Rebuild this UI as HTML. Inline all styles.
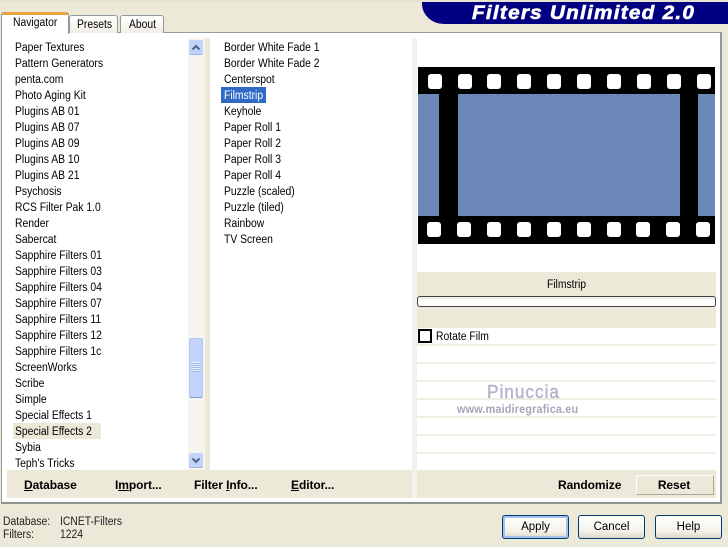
<!DOCTYPE html>
<html><head><meta charset="utf-8"><style>
html,body{margin:0;padding:0;}
body{width:728px;height:547px;overflow:hidden;background:#ece9d8;position:relative;font-family:"Liberation Sans",sans-serif;font-size:11.5px;color:#000;}
div{position:absolute;box-sizing:border-box;}
.t{white-space:nowrap;line-height:16px;height:16px;margin-top:1px;transform:scaleX(.9);transform-origin:0 0;}
.b{font-weight:bold;font-size:12px;white-space:nowrap;line-height:16px;letter-spacing:-.08px;}
.btn{border:1px solid #003c74;border-radius:3px;background:linear-gradient(#fff,#f3f2ea 70%,#dcd8c8);text-align:center;line-height:22px;font-size:11.5px;}
.hole{width:14px;height:15px;background:#fff;border-radius:3px;}
.sep{left:417px;width:299px;height:2px;background:#f0eee2;}
u{text-decoration:underline;}
</style></head><body>
<div style="left:0;top:0;width:728px;height:2px;background:#e6e3d2"></div>
<!-- banner -->
<div style="left:422px;top:2px;width:306px;height:22px;background:#000080;border-bottom-left-radius:22px 20px;"></div>
<div class="t" style="left:472px;top:1px;height:24px;line-height:24px;font-size:19px;font-weight:bold;font-style:italic;color:#fff;letter-spacing:1.15px;-webkit-text-stroke:.6px #fff;transform:scaleX(1.09);">Filters Unlimited 2.0</div>
<!-- main panel -->
<div style="left:1px;top:32px;width:721px;height:472px;background:#fff;border:1px solid #919b9c;border-right:2px solid #8f99a2;border-bottom:2px solid #8f9490;"></div>
<!-- tabs -->
<div style="left:69px;top:15px;width:49px;height:18px;background:linear-gradient(#fff,#f1efe4);border:1px solid #919b9c;border-bottom:0;border-radius:3px 3px 0 0;"></div>
<div style="left:120px;top:15px;width:44px;height:18px;background:linear-gradient(#fff,#f1efe4);border:1px solid #919b9c;border-bottom:0;border-radius:3px 3px 0 0;"></div>
<div style="left:1px;top:12px;width:68px;height:22px;background:#fff;border:1px solid #919b9c;border-bottom:0;border-radius:3px 3px 0 0;"></div>
<div style="left:2px;top:12px;width:66px;height:3px;background:#e8a33c;border-radius:3px 3px 0 0;"></div>
<div class="t" style="left:13px;top:14px;">Navigator</div>
<div class="t" style="left:77px;top:16px;">Presets</div>
<div class="t" style="left:129px;top:16px;">About</div>
<!-- list 1 -->
<div class="t" style="left:15px;top:39px">Paper Textures</div>
<div class="t" style="left:15px;top:55px">Pattern Generators</div>
<div class="t" style="left:15px;top:71px">penta.com</div>
<div class="t" style="left:15px;top:87px">Photo Aging Kit</div>
<div class="t" style="left:15px;top:103px">Plugins AB 01</div>
<div class="t" style="left:15px;top:119px">Plugins AB 07</div>
<div class="t" style="left:15px;top:135px">Plugins AB 09</div>
<div class="t" style="left:15px;top:151px">Plugins AB 10</div>
<div class="t" style="left:15px;top:167px">Plugins AB 21</div>
<div class="t" style="left:15px;top:183px">Psychosis</div>
<div class="t" style="left:15px;top:199px">RCS Filter Pak 1.0</div>
<div class="t" style="left:15px;top:215px">Render</div>
<div class="t" style="left:15px;top:231px">Sabercat</div>
<div class="t" style="left:15px;top:247px">Sapphire Filters 01</div>
<div class="t" style="left:15px;top:263px">Sapphire Filters 03</div>
<div class="t" style="left:15px;top:279px">Sapphire Filters 04</div>
<div class="t" style="left:15px;top:295px">Sapphire Filters 07</div>
<div class="t" style="left:15px;top:311px">Sapphire Filters 11</div>
<div class="t" style="left:15px;top:327px">Sapphire Filters 12</div>
<div class="t" style="left:15px;top:343px">Sapphire Filters 1c</div>
<div class="t" style="left:15px;top:359px">ScreenWorks</div>
<div class="t" style="left:15px;top:375px">Scribe</div>
<div class="t" style="left:15px;top:391px">Simple</div>
<div class="t" style="left:15px;top:407px">Special Effects 1</div>
<div style="left:13px;top:423px;width:88px;height:16px;background:#ece9d8"></div>
<div class="t" style="left:15px;top:423px">Special Effects 2</div>
<div class="t" style="left:15px;top:439px">Sybia</div>
<div class="t" style="left:15px;top:455px">Teph's Tricks</div>
<!-- scrollbar -->
<div style="left:188px;top:38px;width:17px;height:433px;background:#f6f5f0"></div>
<div style="left:189px;top:40px;width:14px;height:15px;background:#c3d3fb;border-radius:2px;border-bottom:1px solid #9db3e0"></div>
<svg style="position:absolute;left:189px;top:40px" width="14" height="15"><path d="M3.5 9.5 L7 6 L10.5 9.5" fill="none" stroke="#4d6185" stroke-width="2"/></svg>
<div style="left:189px;top:338px;width:14px;height:60px;background:#c3d3fb;border-radius:2px;border:1px solid #b4c6f5;border-bottom:1px solid #7f9ddb"></div>
<div style="left:192px;top:362px;width:8px;height:10px;background:repeating-linear-gradient(#eef2fe 0 1px,#9fb5e8 1px 2px)"></div>
<div style="left:189px;top:453px;width:14px;height:15px;background:#c3d3fb;border-radius:2px;border-bottom:1px solid #9db3e0"></div>
<svg style="position:absolute;left:189px;top:453px" width="14" height="15"><path d="M3.5 5.5 L7 9 L10.5 5.5" fill="none" stroke="#4d6185" stroke-width="2"/></svg>
<!-- divider -->
<div style="left:205px;top:38px;width:5px;height:433px;background:#ece9d8"></div>
<!-- list 2 -->
<div class="t" style="left:224px;top:39px">Border White Fade 1</div>
<div class="t" style="left:224px;top:55px">Border White Fade 2</div>
<div class="t" style="left:224px;top:71px">Centerspot</div>
<div style="left:221px;top:87px;width:45px;height:16px;background:#316ac5"></div>
<div class="t" style="left:224px;top:87px;color:#fff">Filmstrip</div>
<div class="t" style="left:224px;top:103px">Keyhole</div>
<div class="t" style="left:224px;top:119px">Paper Roll 1</div>
<div class="t" style="left:224px;top:135px">Paper Roll 2</div>
<div class="t" style="left:224px;top:151px">Paper Roll 3</div>
<div class="t" style="left:224px;top:167px">Paper Roll 4</div>
<div class="t" style="left:224px;top:183px">Puzzle (scaled)</div>
<div class="t" style="left:224px;top:199px">Puzzle (tiled)</div>
<div class="t" style="left:224px;top:215px">Rainbow</div>
<div class="t" style="left:224px;top:231px">TV Screen</div>
<!-- divider 2 -->
<div style="left:412px;top:38px;width:5px;height:460px;background:#f3f2ea"></div>
<!-- film -->
<div style="left:418px;top:67px;width:297px;height:177px;background:#000"></div>
<div style="left:418px;top:94px;width:21px;height:122px;background:#6b88b9"></div>
<div style="left:458px;top:94px;width:222px;height:122px;background:#6b88b9"></div>
<div style="left:698px;top:94px;width:17px;height:122px;background:#6b88b9"></div>
<div class="hole" style="left:428px;top:74px"></div><div class="hole" style="left:458px;top:74px"></div><div class="hole" style="left:487px;top:74px"></div><div class="hole" style="left:517px;top:74px"></div><div class="hole" style="left:547px;top:74px"></div><div class="hole" style="left:577px;top:74px"></div><div class="hole" style="left:607px;top:74px"></div><div class="hole" style="left:637px;top:74px"></div><div class="hole" style="left:667px;top:74px"></div><div class="hole" style="left:697px;top:74px"></div>
<div class="hole" style="left:427px;top:222px"></div><div class="hole" style="left:457px;top:222px"></div><div class="hole" style="left:487px;top:222px"></div><div class="hole" style="left:517px;top:222px"></div><div class="hole" style="left:547px;top:222px"></div><div class="hole" style="left:577px;top:222px"></div><div class="hole" style="left:607px;top:222px"></div><div class="hole" style="left:636px;top:222px"></div><div class="hole" style="left:666px;top:222px"></div><div class="hole" style="left:696px;top:222px"></div>
<!-- params -->
<div style="left:417px;top:272px;width:299px;height:56px;background:#ece9d8"></div>
<div class="t" style="left:417px;top:276px;width:299px;text-align:center;transform-origin:50% 0;">Filmstrip</div>
<div style="left:417px;top:296px;width:299px;height:11px;background:linear-gradient(#e8e6dc,#fff 40%);border:1px solid #444;border-radius:3px;"></div>
<div style="left:418px;top:329px;width:14px;height:14px;background:#fff;border:2px solid #000;"></div>
<div class="t" style="left:436px;top:328px;">Rotate Film</div>
<div class="sep" style="top:344px"></div><div class="sep" style="top:362px"></div><div class="sep" style="top:380px"></div><div class="sep" style="top:398px"></div><div class="sep" style="top:416px"></div><div class="sep" style="top:434px"></div><div class="sep" style="top:452px"></div>
<!-- watermark -->
<div class="t" style="left:487px;top:382px;height:18px;line-height:18px;font-size:18px;color:#b3b3cf;letter-spacing:1px;-webkit-text-stroke:.4px #b3b3cf;transform:scaleX(.96);">Pinuccia</div>
<div class="t" style="left:457px;top:401px;font-size:11.5px;font-weight:bold;color:#a6a6b8;letter-spacing:.2px;transform:scaleX(.94);">www.maidiregrafica.eu</div>
<!-- bottom bars -->
<div style="left:7px;top:470px;width:405px;height:28px;background:#ece9d8"></div>
<div style="left:417px;top:470px;width:299px;height:28px;background:#ece9d8"></div>
<div class="b" style="left:24px;top:477px"><u>D</u>atabase</div>
<div class="b" style="left:115px;top:477px">I<u>m</u>port...</div>
<div class="b" style="left:194px;top:477px">Filter <u>I</u>nfo...</div>
<div class="b" style="left:291px;top:477px"><u>E</u>ditor...</div>
<div class="b" style="left:558px;top:477px">Randomize</div>
<div style="left:636px;top:475px;width:78px;height:20px;background:#ece9d8;border:1px solid;border-color:#fff #aca899 #aca899 #fff;"></div>
<div class="b" style="left:635px;top:477px;width:78px;text-align:center">Reset</div>
<!-- status -->
<div class="t" style="left:3px;top:513px;color:#222">Database:</div>
<div class="t" style="left:60px;top:513px;color:#222">ICNET-Filters</div>
<div class="t" style="left:3px;top:526px;color:#222">Filters:</div>
<div class="t" style="left:60px;top:526px;color:#222">1224</div>
<!-- buttons -->
<div class="btn" style="left:502px;top:515px;width:67px;height:24px;box-shadow:inset 0 0 0 2px #a9c0ec;">Apply</div>
<div class="btn" style="left:578px;top:515px;width:67px;height:24px;">Cancel</div>
<div class="btn" style="left:655px;top:515px;width:67px;height:24px;">Help</div>
</body></html>
